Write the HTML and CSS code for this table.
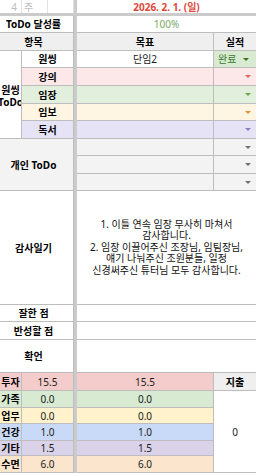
FILE: index.html
```html
<!DOCTYPE html>
<html lang="ko">
<head>
<meta charset="utf-8">
<link rel="stylesheet" href="styles.css">
</head>
<body>
<div class="sheet">
  <div class="vdiv"></div>
  <div class="hdiv"></div>

  <div class="c top num">4</div>
  <div class="c top wk">주</div>
  <div class="c top"></div>
  <div class="c top date cd">2026. 2. 1. (일)</div>

  <div class="c ab lbl">ToDo 달성률</div>
  <div class="c cd rate">100%</div>

  <div class="c ab lbl hd">항목</div>
  <div class="c lbl hd">목표</div>
  <div class="c lbl hd last">실적</div>

  <div class="c a r5 lbl multi"><span>원씽</span><span>ToDo</span></div>
  <div class="c b lbl">원씽</div>
  <div class="c">단임2</div>
  <div class="c done"><span>완료</span><i class="arr"></i></div>

  <div class="c b lbl pink1">강의</div>
  <div class="c pink1"></div>
  <div class="c pink1 dd red"><i class="arr"></i></div>

  <div class="c b lbl green1">임장</div>
  <div class="c green1"></div>
  <div class="c green1 dd grn"><i class="arr"></i></div>

  <div class="c b lbl yellow1">임보</div>
  <div class="c yellow1"></div>
  <div class="c yellow1 dd org"><i class="arr"></i></div>

  <div class="c b lbl purple1">독서</div>
  <div class="c purple1"></div>
  <div class="c purple1 dd pur"><i class="arr"></i></div>

  <div class="c ab r3 lbl gray">개인 ToDo</div>
  <div class="c gray"></div>
  <div class="c gray dd gry"><i class="arr"></i></div>
  <div class="c gray"></div>
  <div class="c gray dd gry"><i class="arr"></i></div>
  <div class="c gray"></div>
  <div class="c gray dd gry"><i class="arr"></i></div>

  <div class="c ab lbl">감사일기</div>
  <div class="c cd diary">1. 이틀 연속 임장 무사히 마쳐서<br>감사합니다.<br>2. 임장 이끌어주신 조장님, 임팀장님,<br>얘기 나눠주신 조원분들, 일정<br>신경써주신 튜터님 모두 감사합니다.</div>

  <div class="c ab lbl">잘한 점</div>
  <div class="c cd"></div>

  <div class="c ab lbl">반성할 점</div>
  <div class="c cd"></div>

  <div class="c ab lbl">확언</div>
  <div class="c cd"></div>

  <div class="c a lbl pink2">투자</div>
  <div class="c b pink2">15.5</div>
  <div class="c pink2">15.5</div>
  <div class="c lbl hd last">지출</div>

  <div class="c a lbl green2">가족</div>
  <div class="c b green2">0.0</div>
  <div class="c green2">0.0</div>
  <div class="c r5 total">0</div>

  <div class="c a lbl yellow2">업무</div>
  <div class="c b yellow2">0.0</div>
  <div class="c yellow2">0.0</div>

  <div class="c a lbl blue2">건강</div>
  <div class="c b blue2">1.0</div>
  <div class="c blue2">1.0</div>

  <div class="c a lbl purple2">기타</div>
  <div class="c b purple2">1.5</div>
  <div class="c purple2">1.5</div>

  <div class="c a lbl orange2">수면</div>
  <div class="c b orange2">6.0</div>
  <div class="c orange2">6.0</div>
</div>
</body>
</html>
```

FILE: styles.css
```css
html, body {
  margin: 0;
  padding: 0;
  background: #ffffff;
}

body {
  font-family: "Noto Sans", "Noto Sans CJK KR", sans-serif;
  font-size: 10px;
  color: #1a1a1a;
}

.sheet {
  display: grid;
  width: 256px;
  grid-template-columns: 22px 26px 26px 3px 137px 42px;
  grid-template-rows:
    13px 3px
    17px 18px 17px 18px 18px 17px 18px
    17px 18px 17px
    114px 17px 18px 33px
    18px 17px 16px 17px 15px 17px;
}

.vdiv {
  grid-column: 4;
  grid-row: 1 / -1;
  background: #cbcbcb;
}

.hdiv {
  grid-column: 1 / -1;
  grid-row: 2;
  background: #cbcbcb;
}

.c {
  box-sizing: border-box;
  border-right: 1px solid #bdbdbd;
  border-bottom: 1px solid #bdbdbd;
  display: flex;
  align-items: center;
  justify-content: center;
  overflow: hidden;
  white-space: nowrap;
  line-height: 12px;
  min-width: 0;
  min-height: 0;
}

.ab { grid-column: span 3; padding-right: 6px; }
.b { grid-column: span 2; }
.cd { grid-column: span 2; border-right: none; }
.r3 { grid-row: span 3; }
.r5 { grid-row: span 5; }
.last { border-right: none; }

.a { flex-direction: column; }
.a span { white-space: nowrap; }

.lbl { font-weight: 700; color: #000; }

.top {
  border-color: #e2e2e2;
  border-bottom: none;
  color: #bdbdbd;
}
.num { justify-content: flex-end; padding-right: 4px; }
.wk { justify-content: flex-start; padding-left: 2px; }
.date {
  color: #e0483d;
  font-weight: 700;
}

.rate { color: #7aa866; }

.hd { background: #efefef; }

.multi { line-height: 12px; padding-top: 2px; }

.done {
  background: #d9ead3;
  color: #3a7a2a;
  justify-content: space-between;
  padding: 0 7px 0 4px;
  border-right: none;
}

.dd {
  justify-content: flex-end;
  padding-right: 5px;
  border-right: none;
}

.arr {
  display: block;
  width: 0;
  height: 0;
  border-left: 3px solid transparent;
  border-right: 3px solid transparent;
  border-top: 3px solid currentColor;
}

.red { color: #e06666; }
.grn { color: #6aa84f; }
.org { color: #e69138; }
.pur { color: #8e7cc3; }
.gry { color: #6f6f6f; }
.done .arr { color: #38761d; }

.pink1 { background: #fce8e8; }
.green1 { background: #e3efdd; }
.yellow1 { background: #fef5e2; }
.purple1 { background: #e6e3f6; }
.gray { background: #f3f3f3; }

.pink2 { background: #f4cccc; }
.green2 { background: #d9ead3; }
.yellow2 { background: #fff2cc; }
.blue2 { background: #c9daf8; }
.purple2 { background: #d9d2e9; }
.orange2 { background: #fce5cd; }

.diary {
  text-align: center;
  line-height: 11.5px;
  color: #111;
}

.total { background: #ffffff; border-right: none; }
```
